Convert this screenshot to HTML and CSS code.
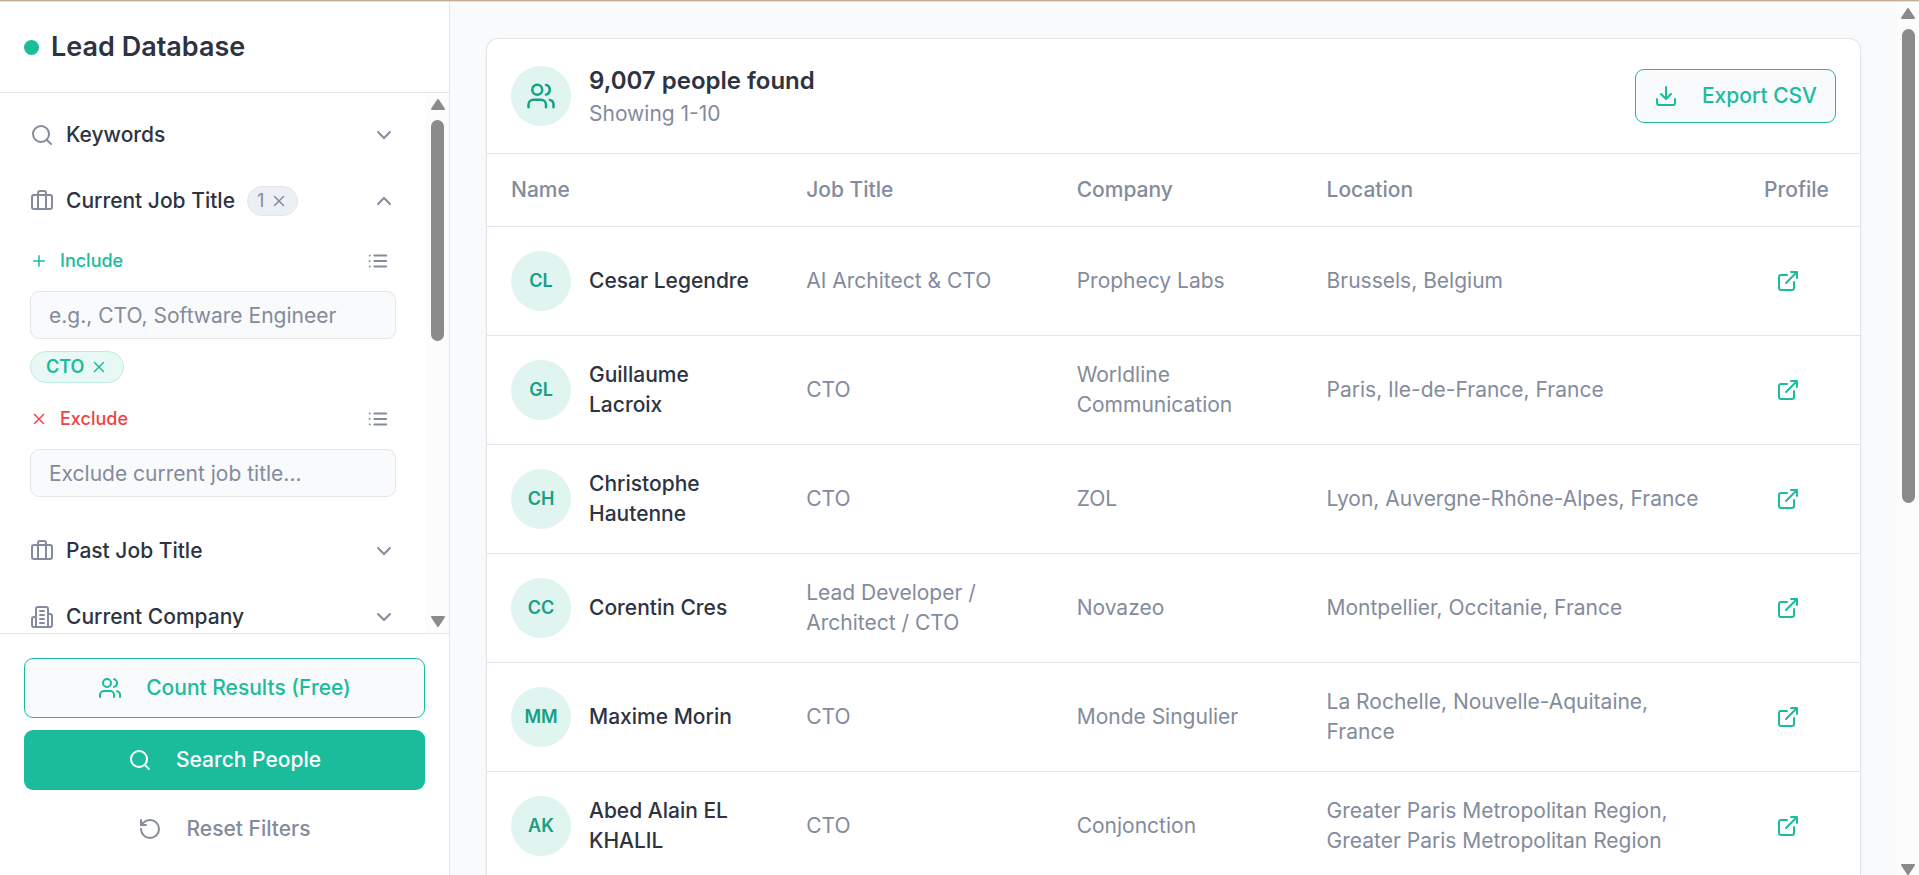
FILE: index.html
```html
<!DOCTYPE html>
<html lang="en">
<head>
  <meta charset="UTF-8" />
  <meta name="viewport" content="width=device-width, initial-scale=1.0"/>
  <title>Lead Database</title>
  <link rel="stylesheet" href="styles.css">
</head>
<body>

  <!-- Icon sprite -->
  <svg class="sprite" aria-hidden="true">
    <symbol id="i-search" viewBox="0 0 24 24"><circle cx="11" cy="11" r="8"/><path d="m21 21-4.3-4.3"/></symbol>
    <symbol id="i-briefcase" viewBox="0 0 24 24"><rect x="2" y="6" width="20" height="14" rx="2"/><path d="M16 20V4a2 2 0 0 0-2-2h-4a2 2 0 0 0-2 2v16"/></symbol>
    <symbol id="i-building" viewBox="0 0 24 24"><path d="M6 22V4a2 2 0 0 1 2-2h8a2 2 0 0 1 2 2v18Z"/><path d="M6 12H4a2 2 0 0 0-2 2v6a2 2 0 0 0 2 2h2"/><path d="M18 9h2a2 2 0 0 1 2 2v9a2 2 0 0 1-2 2h-2"/><path d="M10 6h4M10 10h4M10 14h4M10 18h4"/></symbol>
    <symbol id="i-down" viewBox="0 0 24 24"><path d="m6 9 6 6 6-6"/></symbol>
    <symbol id="i-up" viewBox="0 0 24 24"><path d="m18 15-6-6-6 6"/></symbol>
    <symbol id="i-plus" viewBox="0 0 24 24"><path d="M5 12h14M12 5v14"/></symbol>
    <symbol id="i-x" viewBox="0 0 24 24"><path d="M18 6 6 18M6 6l12 12"/></symbol>
    <symbol id="i-list" viewBox="0 0 24 24"><path d="M3 6h.01M3 12h.01M3 18h.01M8 6h13M8 12h13M8 18h13"/></symbol>
    <symbol id="i-users" viewBox="0 0 24 24"><path d="M16 21v-2a4 4 0 0 0-4-4H6a4 4 0 0 0-4 4v2"/><circle cx="9" cy="7" r="4"/><path d="M22 21v-2a4 4 0 0 0-3-3.87M16 3.13a4 4 0 0 1 0 7.75"/></symbol>
    <symbol id="i-reset" viewBox="0 0 24 24"><path d="M3 12a9 9 0 1 0 9-9 9.75 9.75 0 0 0-6.74 2.74L3 8"/><path d="M3 3v5h5"/></symbol>
    <symbol id="i-download" viewBox="0 0 24 24"><path d="M21 15v4a2 2 0 0 1-2 2H5a2 2 0 0 1-2-2v-4"/><path d="m7 10 5 5 5-5M12 15V3"/></symbol>
    <symbol id="i-external" viewBox="0 0 24 24"><path d="M15 3h6v6M10 14 21 3"/><path d="M18 13v6a2 2 0 0 1-2 2H5a2 2 0 0 1-2-2V8a2 2 0 0 1 2-2h6"/></symbol>
    <symbol id="i-arrow-up" viewBox="0 0 14 11"><path d="M7 1 13 10H1Z"/></symbol>
    <symbol id="i-arrow-down" viewBox="0 0 14 11"><path d="M7 10 13 1H1Z"/></symbol>
  </svg>

  <div class="app">
    <aside class="sidebar">
      <header class="sidebar-header">
        <span class="dot"></span>
        <h1>Lead Database</h1>
      </header>

      <div class="scroll-area">
        <div class="filters">
          <div class="filter-head">
            <svg class="icon"><use href="#i-search"/></svg>
            <span>Keywords</span>
            <button class="toggle" aria-label="Expand keywords"><svg class="icon"><use href="#i-down"/></svg></button>
          </div>

          <div class="filter-head">
            <svg class="icon"><use href="#i-briefcase"/></svg>
            <span>Current Job Title</span>
            <button class="badge" aria-label="Clear 1 filter">1 <svg class="icon small"><use href="#i-x"/></svg></button>
            <button class="toggle" aria-label="Collapse current job title"><svg class="icon"><use href="#i-up"/></svg></button>
          </div>

          <div class="filter-body">
            <div class="field-head include">
              <svg class="icon small"><use href="#i-plus"/></svg>
              <label for="include">Include</label>
              <button class="list-btn" aria-label="Include list"><svg class="icon medium"><use href="#i-list"/></svg></button>
            </div>
            <input type="text" id="include" placeholder="e.g., CTO, Software Engineer">
            <div class="chips">
              <button class="chip">CTO <svg class="icon small"><use href="#i-x"/></svg></button>
            </div>

            <div class="field-head exclude">
              <svg class="icon small"><use href="#i-x"/></svg>
              <label for="exclude">Exclude</label>
              <button class="list-btn" aria-label="Exclude list"><svg class="icon medium"><use href="#i-list"/></svg></button>
            </div>
            <input type="text" id="exclude" placeholder="Exclude current job title...">
          </div>

          <div class="filter-head">
            <svg class="icon"><use href="#i-briefcase"/></svg>
            <span>Past Job Title</span>
            <button class="toggle" aria-label="Expand past job title"><svg class="icon"><use href="#i-down"/></svg></button>
          </div>

          <div class="filter-head">
            <svg class="icon"><use href="#i-building"/></svg>
            <span>Current Company</span>
            <button class="toggle" aria-label="Expand current company"><svg class="icon"><use href="#i-down"/></svg></button>
          </div>
        </div>

        <div class="scrollbar" aria-hidden="true">
          <svg class="arrow"><use href="#i-arrow-up"/></svg>
          <div class="track"><div class="thumb thumb-filters"></div></div>
          <svg class="arrow"><use href="#i-arrow-down"/></svg>
        </div>
      </div>

      <footer class="actions">
        <button class="btn btn-outline"><svg class="icon"><use href="#i-users"/></svg>Count Results (Free)</button>
        <button class="btn btn-primary"><svg class="icon"><use href="#i-search"/></svg>Search People</button>
        <button class="btn btn-ghost"><svg class="icon"><use href="#i-reset"/></svg>Reset Filters</button>
      </footer>
    </aside>

    <main>
      <section class="card">
        <header class="card-header">
          <span class="avatar"><svg class="icon large"><use href="#i-users"/></svg></span>
          <div class="summary">
            <h2>9,007 people found</h2>
            <p>Showing 1-10</p>
          </div>
          <button class="btn btn-outline btn-export"><svg class="icon"><use href="#i-download"/></svg>Export CSV</button>
        </header>

        <table>
          <thead>
            <tr>
              <th class="col-name">Name</th>
              <th class="col-title">Job Title</th>
              <th class="col-company">Company</th>
              <th>Location</th>
              <th class="col-profile">Profile</th>
            </tr>
          </thead>
          <tbody>
            <tr>
              <td><div class="person"><span class="avatar">CL</span><span>Cesar Legendre</span></div></td>
              <td>AI Architect &amp; CTO</td>
              <td>Prophecy Labs</td>
              <td>Brussels, Belgium</td>
              <td><a class="profile" href="#" aria-label="Open profile"><svg class="icon"><use href="#i-external"/></svg></a></td>
            </tr>
            <tr>
              <td><div class="person"><span class="avatar">GL</span><span>Guillaume Lacroix</span></div></td>
              <td>CTO</td>
              <td>Worldline Communication</td>
              <td>Paris, Ile-de-France, France</td>
              <td><a class="profile" href="#" aria-label="Open profile"><svg class="icon"><use href="#i-external"/></svg></a></td>
            </tr>
            <tr>
              <td><div class="person"><span class="avatar">CH</span><span>Christophe Hautenne</span></div></td>
              <td>CTO</td>
              <td>ZOL</td>
              <td>Lyon, Auvergne-Rhône-Alpes, France</td>
              <td><a class="profile" href="#" aria-label="Open profile"><svg class="icon"><use href="#i-external"/></svg></a></td>
            </tr>
            <tr>
              <td><div class="person"><span class="avatar">CC</span><span>Corentin Cres</span></div></td>
              <td>Lead Developer / Architect / CTO</td>
              <td>Novazeo</td>
              <td>Montpellier, Occitanie, France</td>
              <td><a class="profile" href="#" aria-label="Open profile"><svg class="icon"><use href="#i-external"/></svg></a></td>
            </tr>
            <tr>
              <td><div class="person"><span class="avatar">MM</span><span>Maxime Morin</span></div></td>
              <td>CTO</td>
              <td>Monde Singulier</td>
              <td>La Rochelle, Nouvelle-Aquitaine, France</td>
              <td><a class="profile" href="#" aria-label="Open profile"><svg class="icon"><use href="#i-external"/></svg></a></td>
            </tr>
            <tr>
              <td><div class="person"><span class="avatar">AK</span><span>Abed Alain EL KHALIL</span></div></td>
              <td>CTO</td>
              <td>Conjonction</td>
              <td>Greater Paris Metropolitan Region, Greater Paris Metropolitan Region</td>
              <td><a class="profile" href="#" aria-label="Open profile"><svg class="icon"><use href="#i-external"/></svg></a></td>
            </tr>
          </tbody>
        </table>
      </section>
    </main>

    <div class="scrollbar scrollbar-page" aria-hidden="true">
      <svg class="arrow"><use href="#i-arrow-up"/></svg>
      <div class="track"><div class="thumb thumb-page"></div></div>
      <svg class="arrow"><use href="#i-arrow-down"/></svg>
    </div>
  </div>

</body>
</html>
```
FILE: styles.css
```css
:root {
  --teal: #1abc9c;
  --teal-dark: #16a085;
  --teal-light: #e0f5f0;
  --text: #2d3340;
  --muted: #838b9c;
  --border: #e3e5e9;
  --bg: #f8fafc;
}
* {
  box-sizing: border-box;
}
body {
  font-family: Inter, "Liberation Sans", sans-serif;
  font-size: 21px;
  line-height: 30px;
  color: var(--text);
  background: var(--bg);
  margin: 0;
}
h1, h2, p {
  margin: 0;
}
button, input {
  font: inherit;
}
button {
  background: none;
  border: none;
  padding: 0;
  color: inherit;
  cursor: pointer;
}
.sprite {
  display: none;
}
.icon {
  width: 24px;
  height: 24px;
  flex: none;
  fill: none;
  stroke: currentColor;
  stroke-width: 2;
  stroke-linecap: round;
  stroke-linejoin: round;
}
.icon.small {
  width: 18px;
  height: 18px;
}
.icon.medium {
  width: 22px;
  height: 22px;
}
.icon.large {
  width: 30px;
  height: 30px;
}

.app {
  display: flex;
  height: 100vh;
  overflow: hidden;
  padding-top: 1px;
  background: #fcdcb8;
  border-top: 1px solid #c4ac92;
}

/* Sidebar */
.sidebar {
  display: flex;
  flex-direction: column;
  width: 450px;
  flex: none;
  background: white;
  border-right: 1px solid var(--border);
}
.sidebar-header {
  display: flex;
  align-items: center;
  gap: 12px;
  height: 91px;
  flex: none;
  padding: 0 24px;
  border-bottom: 1px solid var(--border);
}
.dot {
  width: 15px;
  height: 15px;
  border-radius: 50%;
  background: var(--teal);
}
h1 {
  font-size: 27px;
  font-weight: 600;
}
.scroll-area {
  display: flex;
  flex: 1;
  min-height: 0;
}
.filters {
  flex: 1;
  padding: 9px 30px;
  overflow: hidden;
}
.filter-head {
  display: flex;
  align-items: center;
  gap: 12px;
  height: 66px;
  font-weight: 500;
}
.filter-head .icon {
  color: var(--muted);
}
.toggle {
  display: flex;
  margin-left: auto;
}
.badge {
  display: flex;
  align-items: center;
  gap: 6px;
  height: 30px;
  padding: 0 9px;
  font-size: 18px;
  font-weight: 400;
  color: var(--muted);
  background: #eceff3;
  border: 1px solid var(--border);
  border-radius: 15px;
}
.filter-body {
  padding: 9px 0 21px;
}
.field-head {
  display: flex;
  align-items: center;
  gap: 12px;
  height: 36px;
  margin-bottom: 12px;
  font-size: 18px;
  font-weight: 500;
}
.include {
  color: var(--teal);
}
.exclude {
  color: #ef4444;
}
.list-btn {
  display: flex;
  align-items: center;
  justify-content: center;
  width: 36px;
  height: 36px;
  margin-left: auto;
  color: var(--muted);
}
input {
  display: block;
  width: 100%;
  height: 48px;
  padding: 0 18px;
  color: var(--text);
  background: var(--bg);
  border: 1px solid var(--border);
  border-radius: 9px;
}
input::placeholder {
  color: var(--muted);
  opacity: 1;
}
.chips {
  display: flex;
  padding: 12px 0 18px;
}
.chip {
  display: flex;
  align-items: center;
  gap: 6px;
  height: 32px;
  padding: 0 15px;
  font-size: 18px;
  font-weight: 600;
  color: var(--teal);
  background: #e8f8f5;
  border: 1px solid #bdeee3;
  border-radius: 16px;
}

/* Buttons */
.actions {
  display: flex;
  flex-direction: column;
  gap: 12px;
  height: 242px;
  flex: none;
  padding: 24px;
  border-top: 1px solid var(--border);
}
.btn {
  display: flex;
  align-items: center;
  justify-content: center;
  gap: 24px;
  height: 60px;
  flex: none;
  border-radius: 9px;
  font-weight: 500;
}
.btn-outline {
  color: var(--teal);
  background: var(--bg);
  border: 1px solid var(--teal);
}
.btn-primary {
  color: white;
  background: var(--teal);
}
.btn-ghost {
  height: 54px;
  color: var(--muted);
}
.btn-export {
  height: 54px;
  margin-left: auto;
  padding: 0 18px;
}

/* Results */
main {
  flex: 1;
  min-width: 0;
  padding: 36px;
  background: var(--bg);
}
.card {
  padding-bottom: 24px;
  background: white;
  border: 1px solid var(--border);
  border-radius: 12px;
  box-shadow: 0 1px 3px rgba(0,0,0,0.05);
}
.card-header {
  display: flex;
  align-items: center;
  gap: 18px;
  padding: 24px;
  border-bottom: 1px solid var(--border);
}
h2 {
  font-size: 24px;
  line-height: 36px;
  font-weight: 600;
}
.summary p {
  color: var(--muted);
}
.avatar {
  display: flex;
  align-items: center;
  justify-content: center;
  width: 60px;
  height: 60px;
  flex: none;
  border-radius: 50%;
  font-size: 18px;
  font-weight: 600;
  color: var(--teal-dark);
  background: var(--teal-light);
}
table {
  width: 100%;
  table-layout: fixed;
  border-collapse: separate;
  border-spacing: 0;
}
th, td {
  padding: 0 24px;
  text-align: left;
  color: var(--muted);
  border-bottom: 1px solid var(--border);
}
th {
  height: 73px;
  font-weight: 500;
}
td {
  height: 109px;
}
.col-name {
  width: 21.5%;
}
.col-title {
  width: 19.7%;
}
.col-company {
  width: 18.2%;
}
.col-profile {
  width: 120px;
}
.person {
  display: flex;
  align-items: center;
  gap: 18px;
  font-weight: 500;
  color: var(--text);
}
.profile {
  display: flex;
  align-items: center;
  justify-content: center;
  width: 48px;
  height: 48px;
  color: var(--teal);
}

/* Scrollbars */
.scrollbar {
  display: flex;
  flex-direction: column;
  align-items: center;
  gap: 10px;
  width: 23px;
  flex: none;
  padding: 6px 0;
  background: #fcfcfc;
}
.scrollbar-page {
  width: 22px;
  padding-bottom: 0;
}
.arrow {
  width: 14px;
  height: 11px;
  flex: none;
  fill: #8b8b8b;
  stroke: #8b8b8b;
  stroke-width: 2;
  stroke-linejoin: round;
}
.track {
  flex: 1;
  width: 13px;
}
.thumb {
  border-radius: 7px;
  background: #8b8b8b;
}
.thumb-filters {
  height: 45.5%;
}
.thumb-page {
  height: 57.5%;
}
```
